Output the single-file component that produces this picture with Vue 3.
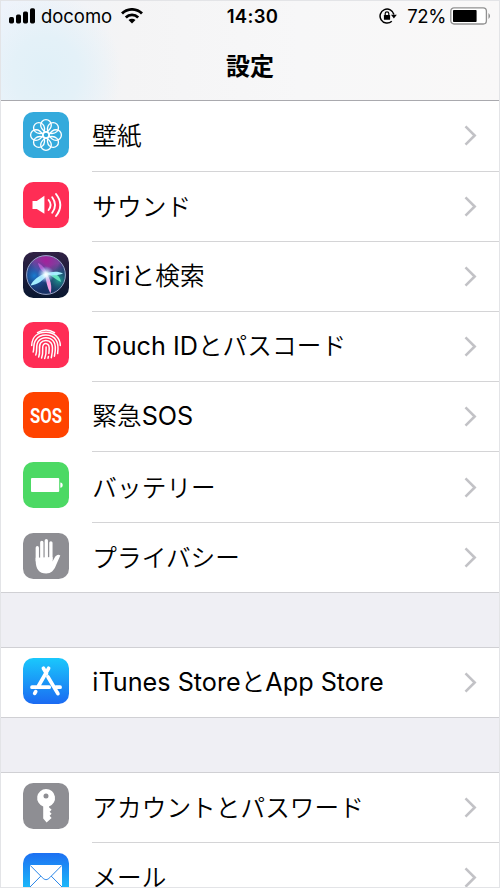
<script setup>
const groups = [
  [
    { icon: 'wallpaper', parts: [{ t: '壁紙' }] },
    { icon: 'sound', parts: [{ t: 'サウンド' }] },
    { icon: 'siri', parts: [{ t: 'Siri', latin: true }, { t: 'と検索' }] },
    { icon: 'touch', parts: [{ t: 'Touch ID', latin: true }, { t: 'とパスコード' }] },
    { icon: 'sos', parts: [{ t: '緊急' }, { t: 'SOS', latin: true }] },
    { icon: 'battery', parts: [{ t: 'バッテリー' }] },
    { icon: 'privacy', parts: [{ t: 'プライバシー' }] }
  ],
  [
    { icon: 'store', parts: [{ t: 'iTunes Store', latin: true }, { t: 'と' }, { t: 'App Store', latin: true }] }
  ],
  [
    { icon: 'key', parts: [{ t: 'アカウントとパスワード' }] },
    { icon: 'mail', parts: [{ t: 'メール' }] }
  ]
]
const petals = [0, 45, 90, 135, 180, 225, 270, 315]
</script>

<template>
  <div class="phone">
    <header class="header">
      <div class="status">
        <div class="carrier">
          <svg class="signal" width="27" height="16" viewBox="0 0 27 16">
            <rect x="0" y="9" width="5" height="6.5" rx="1.7" />
            <rect x="7" y="6.5" width="5" height="9" rx="1.7" />
            <rect x="14" y="3.5" width="5" height="12" rx="1.7" />
            <rect x="21" y="0.3" width="5" height="15.2" rx="1.7" />
          </svg>
          <span class="carrier-name">docomo</span>
          <svg class="wifi" width="22" height="16" viewBox="0 0 22 16">
            <g fill="none" stroke="#000" stroke-width="2.8">
              <path d="M1 5.5a14.2 14.2 0 0 1 20 0" />
              <path d="M4.8 9.4a8.8 8.8 0 0 1 12.4 0" />
            </g>
            <path d="M11 15.6l-3.5-3.5a5 5 0 0 1 7 0z" />
          </svg>
        </div>
        <span class="time">14:30</span>
        <div class="power">
          <svg class="lock" width="18" height="16" viewBox="0 0 18 16">
            <path d="M12.8 13.2A7 7 0 1 1 14.9 6.5" fill="none" stroke="#000" stroke-width="1.5" />
            <path d="M12 6.7h5.8l-2.9 3.8z" />
            <rect x="4.9" y="7" width="6.2" height="4.8" rx=".6" />
            <path d="M6.2 7.2V5.6a1.8 1.8 0 0 1 3.6 0v1.6" fill="none" stroke="#000" stroke-width="1.2" />
          </svg>
          <span class="percent">72%</span>
          <svg class="cell" width="42" height="18" viewBox="0 0 42 18">
            <rect x=".8" y=".8" width="35.6" height="16.2" rx="3.2" fill="#fff" stroke="#919191" stroke-width="1.3" />
            <rect x="3" y="3" width="23.6" height="12" rx=".8" />
            <path d="M38.5 6q3 3 0 6z" fill="#888" />
          </svg>
        </div>
      </div>
      <h1>設定</h1>
    </header>

    <main>
      <section v-for="(rows, g) in groups" :key="g" class="group">
        <div v-for="row in rows" :key="row.icon" class="row">
          <svg class="icon" :class="row.icon" viewBox="0 0 46 46">
            <defs>
              <linearGradient id="storeFill" x1="0" y1="0" x2="0" y2="1">
                <stop offset="0" stop-color="#1ac8fc" /><stop offset="1" stop-color="#1b6af2" />
              </linearGradient>
              <linearGradient id="mailFill" x1="0" y1="0" x2="0" y2="1">
                <stop offset="0" stop-color="#1d70f2" /><stop offset="1" stop-color="#1bd0fc" />
              </linearGradient>
              <linearGradient id="siriBack" x1="0" y1="0" x2="0" y2="1">
                <stop offset="0" stop-color="#302144" /><stop offset="1" stop-color="#091730" />
              </linearGradient>
              <radialGradient id="siriPink" cx=".5" cy=".12" r=".65">
                <stop offset="0" stop-color="#a5209c" /><stop offset=".5" stop-color="#79439d" /><stop offset="1" stop-color="#293c84" stop-opacity="0" />
              </radialGradient>
              <radialGradient id="siriBlue" cx=".2" cy=".52" r=".42">
                <stop offset="0" stop-color="#187cd0" /><stop offset="1" stop-color="#214a9c" stop-opacity="0" />
              </radialGradient>
              <radialGradient id="siriGreen" cx=".83" cy=".62" r=".42">
                <stop offset="0" stop-color="#219b91" /><stop offset="1" stop-color="#183a63" stop-opacity="0" />
              </radialGradient>
              <radialGradient id="siriGlow">
                <stop offset="0" stop-color="#fff" /><stop offset=".25" stop-color="#e7fcff" stop-opacity=".9" /><stop offset="1" stop-color="#8ac5ff" stop-opacity="0" />
              </radialGradient>
            </defs>
            <rect class="tile" width="46" height="46" rx="10.3" />

            <g v-if="row.icon === 'wallpaper'" fill="none" stroke="#fff" stroke-width="1.35">
              <path v-for="a in petals" :key="a" :transform="`rotate(${a} 23 23)`" d="M23 20C19.5 18.200 17.700 15.700 17.700 12.900a5.300 5.300 0 0 1 10.600 0C28.300 15.700 26.500 18.200 23 20Z" />
              <circle cx="23" cy="23" r="3" />
            </g>

            <g v-else-if="row.icon === 'sound'">
              <path d="M9.5 19h4.3l7.6-5.2v17.9L13.8 27H9.5z" fill="#fff" />
              <g fill="none" stroke="#fff" stroke-width="1.9" stroke-linecap="round">
                <path d="M25.6 18q4 5 0 10" />
                <path d="M29.2 15.2q5.7 7.8 0 15.6" />
                <path d="M33 12q8.6 11 0 22" />
              </g>
            </g>

            <g v-else-if="row.icon === 'siri'">
              <g fill="#173165">
                <circle cx="23" cy="23" r="19.5" />
                <circle cx="23" cy="23" r="19.5" fill="url(#siriPink)" />
                <circle cx="23" cy="23" r="19.5" fill="url(#siriBlue)" />
                <circle cx="23" cy="23" r="19.5" fill="url(#siriGreen)" />
              </g>
              <path d="M24 21C16 23 10 28 7.500 33.500c7-1 13-5 17-11Z" fill="#a3edff" />
              <path d="M22 21c1 8 2 14 5.500 20.500 2-7 0-15-4.500-20.500Z" fill="#f3a0e4" />
              <path d="M23 21c5 2 10 7 15 9-1-7-7-10-15-9Z" fill="#62e3bd" />
              <path d="M22 22c7-3 13-3 18-.5-5 2-11 2.500-18 .5Z" fill="#a6efff" />
              <path d="M24 22c-1-5-5-9-9-11 1 5 4 9 9 11Z" fill="#c867df" opacity=".75" />
              <circle cx="23" cy="22.500" r="8.500" fill="url(#siriGlow)" />
              <circle cx="23" cy="23" r="19.4" fill="none" stroke="#98a5c7" stroke-width="1" />
            </g>

            <g v-else-if="row.icon === 'touch'" fill="none" stroke="#fff" stroke-width="1.5" stroke-linecap="round">
              <path d="M14.5 10.600Q23 5.200 31.500 10.600" />
              <path d="M8.7 23.5C9 14.7 14.8 10.3 23 10.3c8.7 0 14.3 5.9 14.3 13.3" />
              <path d="M10.2 30c1.2-3-.4-8.2 2.6-12 4.5-6.7 16-6.5 20.3.2 2.8 4 2 10 1.5 13.4" />
              <path d="M12.8 33c2-5-.6-10 2.8-14 3.6-4.5 11.2-4.4 14.9.2 3.2 4 1.8 10.3.9 15" />
              <path d="M15.7 35c2.4-6-.9-10.8 2.1-14.2 2.5-3.3 7.9-3.2 10.3.2 2.8 4 1 10.2.2 14.7" />
              <path d="M18.6 36c2.7-7-.5-10.8 2-13.4 1.7-1.7 4.3-1.1 5.2 1 1 2.8.3 5.4 0 7.8" />
              <path d="M21.7 36.5c1.8-4.4 1.5-8.5 1.4-11.5M25 36.2l.4-1.8" />
            </g>

            <text v-else-if="row.icon === 'sos'" class="sos-text" x="23" y="30.6" textLength="32" lengthAdjust="spacingAndGlyphs">SOS</text>

            <g v-else-if="row.icon === 'battery'" fill="#fff">
              <rect x="8" y="16" width="28.2" height="14" rx="1" />
              <path d="M37.3 20.5c3.2 0 3.2 5.2 0 5.2z" />
            </g>

            <g v-else-if="row.icon === 'privacy'">
              <path d="M12.700 24.800V28c0 8 3.500 12.500 10.500 12.500 5 0 7.600-2.800 9.500-7.400l4.600-10.700c-2.3-1.6-4.6.2-5.7 2.400l-2.100 3.600V24z" fill="#fff" />
              <g stroke="#fff" stroke-width="3.3" stroke-linecap="round">
                <path d="M14.3 14.700v13M18.800 9.300v17M23.300 7.600v19M27.900 9.800v17" />
              </g>
            </g>

            <g v-else-if="row.icon === 'store'" fill="none" stroke="#fff" stroke-width="3.7" stroke-linecap="round">
              <path d="M25.6 10.3 15.5 28M20.4 10.3l3.1 5.3M25 19l9.9 16.6M9 29.2h17.2M33 29.2h4.1M12.7 33.6l-1 1.8" />
            </g>

            <g v-else-if="row.icon === 'key'">
              <path fill="#fff" fill-rule="evenodd" d="M23 6a9 9 0 0 0-2.8 17.5v12l3.4 4 5-4.5-2-2.2 2-2-2-2 2-2-2.6-2.5v-.8A9 9 0 0 0 23 6Zm0 4.6a2.5 2.5 0 1 1 0 5 2.5 2.5 0 0 1 0-5Z" />
            </g>

            <g v-else-if="row.icon === 'mail'">
              <rect x="7" y="12" width="32" height="22" rx="1" fill="#fff" />
              <path d="m7.3 12.5 12 12.1c2.7 2.7 4.8 2.7 7.5 0l12-12.1M7 34l10.8-10.9M39 34 28.2 23.1" fill="none" stroke="#2885e8" stroke-width="1" />
            </g>
          </svg>
          <div class="content">
            <span class="label"><span v-for="(p, i) in row.parts" :key="i" :class="{ latin: p.latin }">{{ p.t }}</span></span>
            <svg class="chevron" width="13" height="21" viewBox="0 0 13 21">
              <path d="M1.5 1.3 10.7 10.5 1.5 19.7" fill="none" stroke="#c2c2c6" stroke-width="2.6" />
            </svg>
          </div>
        </div>
      </section>
    </main>
  </div>
</template>

<style>
body { margin: 0; overflow: hidden; }
</style>

<style scoped>
.phone {
  box-sizing: border-box;
  width: 500px;
  height: 888px;
  overflow: hidden;
  border: 1px solid #e3e4e7;
  background: #efeff4;
  color: #000;
  font-family: Inter, "Noto Sans CJK JP", sans-serif;
}
.header {
  box-sizing: border-box;
  height: 100px;
  border-bottom: 1px solid #a9a9ae;
  background: radial-gradient(ellipse 75px 80px at 45px 72px, #e0f0f8 0%, #e4f1f8 45%, rgba(236, 242, 251, 0) 100%), linear-gradient(90deg, #eef3fb, #f4f4f5 25%, #f7f7f8 60%, #f9f8f8);
}
.status {
  display: grid;
  grid-template-columns: 1fr auto 1fr;
  align-items: center;
  height: 30px;
  padding: 0 8px;
}
.carrier, .power { display: flex; align-items: center; }
.carrier-name { margin-left: 5px; font-size: 18.5px; letter-spacing: -0.05px; }
.wifi { margin-left: 9px; }
.time { padding-left: 5px; font-size: 18.5px; font-weight: 600; letter-spacing: 0.3px; }
.power { justify-content: flex-end; }
.percent { margin: 0 4px 0 10px; font-size: 18.5px; letter-spacing: -0.4px; }
.cell { margin-right: -1px; }
h1 {
  margin: 0;
  font: 700 24px/68px "Noto Sans CJK JP", sans-serif;
  text-align: center;
}
.group {
  border-bottom: 1px solid #d0d0d4;
  background: #fff;
}
.group + .group { margin-top: 54.4px; border-top: 1px solid #d0d0d4; }
.row { display: flex; align-items: stretch; height: 70.2px; }
.row:first-child { height: 69.7px; }
.group + .group .row { height: 68.4px; }
.group:last-child .row { height: 69.3px; }
.group + .group .row + .row { height: 70.3px; }
.icon { flex: none; width: 46px; height: 46px; margin: 11px 23px 0 22px; }
.group + .group .icon { margin-top: 10px; }
.group + .group .row + .row .icon { margin-top: 11px; }
.content {
  box-sizing: border-box;
  display: flex;
  flex: 1;
  align-items: center;
  justify-content: space-between;
  padding-right: 22px;
}
.row + .row .content { border-top: 1px solid #d4d4d6; }
.label {
  display: flex;
  align-items: baseline;
  padding: 0 0 3px 0.3px;
  font: 350 24.6px/36px "Noto Sans CJK JP", sans-serif;
  letter-spacing: 0.1px;
  white-space: pre;
}
.latin { font-family: Inter, sans-serif; font-size: 25.2px; font-weight: 400; letter-spacing: 0; }
.chevron { flex: none; }
.tile { fill: #ff2d55; }
.wallpaper .tile { fill: #34aadc; }
.siri .tile { fill: url(#siriBack); }
.sos .tile { fill: #ff4300; }
.battery .tile { fill: #4cd964; }
.privacy .tile, .key .tile { fill: #8e8e93; }
.store .tile { fill: url(#storeFill); }
.mail .tile { fill: url(#mailFill); }
.sos-text { fill: #fff; font: 700 21px Roboto, sans-serif; text-anchor: middle; }
</style>
